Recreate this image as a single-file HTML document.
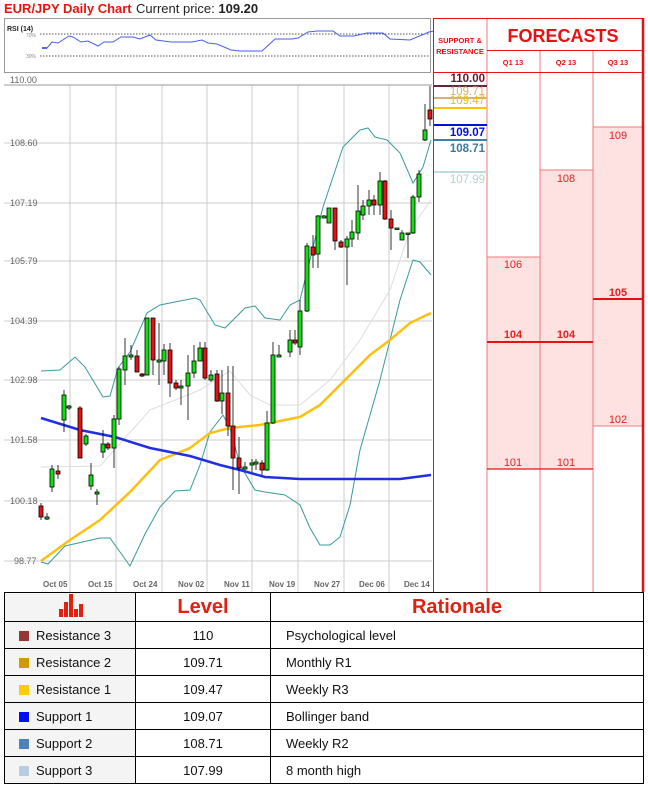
<!DOCTYPE html>
<html><head><meta charset="utf-8"><style>
html,body{margin:0;padding:0;background:#fff;width:648px;height:792px;overflow:hidden;font-family:"Liberation Sans",sans-serif}
svg{position:absolute;left:0;top:0}
table{position:absolute;left:4px;top:592px;width:640px;border-collapse:collapse;table-layout:fixed;font-size:13px;color:#111}
td{border:1.5px solid #000;height:26px;padding:0;white-space:nowrap;overflow:hidden}
tr.h td{height:28px}
.c1{background:#f4f4f4;padding-left:14px}
.c2{text-align:center}
.c3{padding-left:15px}
.sq{display:inline-block;width:10px;height:10px;margin-right:7px;vertical-align:-1px}
.hd{color:#e02010;font-weight:bold;font-size:20px;text-align:center}
</style></head><body>
<svg width="648" height="592" xmlns="http://www.w3.org/2000/svg" font-family="Liberation Sans, sans-serif">
<text x="4" y="13" fill="#e8140c" font-size="13" font-weight="bold">EUR/JPY Daily Chart</text>
<text x="136" y="13" fill="#222" font-size="13">Current price: <tspan font-weight="bold">109.20</tspan></text>
<rect x="4.5" y="18.5" width="426" height="54" fill="#fff" stroke="#999"/>
<text x="7" y="31" font-size="7" font-weight="bold" fill="#222">RSI (14)</text>
<text x="26" y="37" font-size="5" fill="#888">70%</text>
<text x="26" y="58" font-size="5" fill="#888">30%</text>
<line x1="40" y1="34" x2="430" y2="34" stroke="#555" stroke-dasharray="1.5,1.5"/>
<line x1="40" y1="56" x2="430" y2="56" stroke="#555" stroke-dasharray="1.5,1.5"/>
<polyline fill="none" stroke="#4a5cf0" stroke-width="1" points="42,48 47,48 52,42 58,43 69,36 73,37 81,42 88,41 98,46 104,42 113,42 121,37 133,37 140,39 150,35 156,40 171,42 192,42 202,40 208,43 217,44 231,50 240,51 262,51 275,39 292,39 298,38 308,32 317,31 333,31 340,36 354,36 367,33 383,33 390,39 410,40 429,32 434,31"/>
<polyline fill="none" stroke="#2233dd" stroke-width="1.5" points="42,48 47,48"/>
<g stroke="#ccc" stroke-width="1">
<line x1="4" y1="143" x2="432" y2="143"/><line x1="4" y1="203" x2="432" y2="203"/>
<line x1="4" y1="261" x2="432" y2="261"/><line x1="4" y1="321" x2="432" y2="321"/>
<line x1="4" y1="380" x2="432" y2="380"/><line x1="4" y1="440" x2="432" y2="440"/>
<line x1="4" y1="501" x2="432" y2="501"/><line x1="4" y1="561" x2="432" y2="561"/>
<line x1="70" y1="85" x2="70" y2="592"/><line x1="116" y1="85" x2="116" y2="592"/>
<line x1="162" y1="85" x2="162" y2="592"/><line x1="207" y1="85" x2="207" y2="592"/>
<line x1="252" y1="85" x2="252" y2="592"/><line x1="298" y1="85" x2="298" y2="592"/>
<line x1="344" y1="85" x2="344" y2="592"/><line x1="389" y1="85" x2="389" y2="592"/>
</g>
<line x1="4" y1="85" x2="432" y2="85" stroke="#999"/>
<g font-size="9" fill="#666">
<text x="10" y="83">110.00</text><text x="10" y="146">108.60</text><text x="10" y="206">107.19</text>
<text x="10" y="264">105.79</text><text x="10" y="324">104.39</text><text x="10" y="383">102.98</text>
<text x="10" y="443">101.58</text><text x="10" y="504">100.18</text><text x="14" y="564">98.77</text>
</g>
<g font-size="8" fill="#666" font-weight="bold">
<text x="43" y="587">Oct 05</text><text x="88" y="587">Oct 15</text><text x="133" y="587">Oct 24</text>
<text x="178" y="587">Nov 02</text><text x="224" y="587">Nov 11</text><text x="269" y="587">Nov 19</text>
<text x="314" y="587">Nov 27</text><text x="359" y="587">Dec 06</text><text x="404" y="587">Dec 14</text>
</g>
<polyline fill="none" stroke="#ddd" stroke-width="1" points="41,467 100,466 150,410 200,390 230,371 250,395 270,405 300,405 330,380 360,340 390,290 410,230 431,200"/>
<polyline fill="none" stroke="#3a9a9a" stroke-width="1" points="41,371 60,370 75,357 85,367 103,397 110,396 118,368 130,352 147,313 160,305 195,298 200,300 215,325 225,328 245,308 255,306 265,318 280,320 290,305 300,300 323,207 343,147 360,130 368,128 375,137 387,140 400,153 413,183 423,167 431,140"/>
<polyline fill="none" stroke="#3a9a9a" stroke-width="1" points="41,562 48,564 65,546 100,538 110,538 130,566 145,534 160,507 175,491 190,490 200,465 210,432 223,415 230,428 240,465 255,490 265,492 285,495 300,505 310,528 320,545 330,545 340,537 350,505 360,450 380,380 400,300 413,260 420,262 431,275"/>
<polyline fill="none" stroke="#fcc010" stroke-width="2.5" points="41,561 70,540 100,520 130,492 160,460 190,448 210,433 230,428 260,425 300,417 320,405 350,375 370,355 390,340 410,323 431,313"/>
<polyline fill="none" stroke="#2030e0" stroke-width="2.5" points="41,418 80,430 115,437 150,448 190,456 220,465 240,470 265,477 300,479 350,479 400,479 431,475"/>
<g id="c" stroke="#000" stroke-width="0.8"></g>
<rect x="487" y="257" width="53" height="212" fill="#fee2e2"/>
<rect x="540" y="170" width="53" height="299" fill="#fee2e2"/>
<rect x="593" y="127" width="50" height="299" fill="#fee2e2"/>
<g stroke="#f07878" stroke-width="1">
<line x1="487" y1="257" x2="540" y2="257"/><line x1="540" y1="170" x2="593" y2="170"/>
<line x1="593" y1="127" x2="643" y2="127"/><line x1="593" y1="426" x2="643" y2="426"/>
<line x1="540" y1="50" x2="540" y2="592"/><line x1="593" y1="50" x2="593" y2="592"/>
<line x1="487" y1="18" x2="487" y2="592"/>
</g>
<g stroke="#e81010">
<line x1="487" y1="469" x2="593" y2="469" stroke-width="1.2"/>
<line x1="487" y1="342" x2="593" y2="342" stroke-width="2"/>
<line x1="593" y1="299" x2="643" y2="299" stroke-width="2"/>
<line x1="433.5" y1="18" x2="433.5" y2="592" stroke-width="1"/>
<line x1="433" y1="18.5" x2="644" y2="18.5" stroke-width="1"/>
<line x1="487" y1="50.5" x2="644" y2="50.5" stroke-width="1"/>
<line x1="433" y1="72.5" x2="644" y2="72.5" stroke-width="1"/>
<line x1="643" y1="18" x2="643" y2="592" stroke-width="2.5"/>
</g>
<text x="460" y="43" font-size="7.5" font-weight="bold" fill="#e81010" text-anchor="middle">SUPPORT &amp;</text>
<text x="460" y="54" font-size="7.5" font-weight="bold" fill="#e81010" text-anchor="middle">RESISTANCE</text>
<text x="563" y="42" font-size="18" font-weight="bold" fill="#e81010" text-anchor="middle">FORECASTS</text>
<g font-size="7.5" font-weight="bold" fill="#e81010" text-anchor="middle">
<text x="513" y="65">Q1 13</text><text x="566" y="65">Q2 13</text><text x="618" y="65">Q3 13</text>
</g>
<g font-size="11" fill="#e82020" text-anchor="middle">
<text x="513" y="268">106</text><text x="566" y="182">108</text><text x="618" y="139">109</text>
<text x="618" y="423">102</text><text x="513" y="466">101</text><text x="566" y="466">101</text>
<text x="513" y="338" font-weight="bold">104</text><text x="566" y="338" font-weight="bold">104</text>
<text x="618" y="296" font-weight="bold">105</text>
</g>
<g stroke-width="2">
<line x1="434" y1="86" x2="487" y2="86" stroke="#6b2040"/>
<line x1="434" y1="98" x2="487" y2="98" stroke="#d8b070"/>
<line x1="434" y1="108" x2="487" y2="108" stroke="#ffc000"/>
<line x1="434" y1="125" x2="487" y2="125" stroke="#0010e0"/>
<line x1="434" y1="140" x2="487" y2="140" stroke="#4080a8"/>
<line x1="434" y1="172" x2="487" y2="172" stroke="#c0dcd8"/>
</g>
<g font-size="11.5" font-weight="bold" text-anchor="end">
<text x="485" y="82" fill="#5a1a30">110.00</text>
<text x="485" y="95" fill="#d8b070" font-weight="normal">109.71</text>
<text x="485" y="104" fill="#f0c000" font-weight="normal">109.47</text>
<text x="485" y="136" fill="#0010e0">109.07</text>
<text x="485" y="152" fill="#3878a0">108.71</text>
<text x="485" y="183" fill="#b0d4d0" font-weight="normal">107.99</text>
</g>
</svg>
<table>
<colgroup><col style="width:131px"><col style="width:135px"><col></colgroup>
<tr class="h"><td class="c1" style="position:relative">
<svg width="30" height="26" style="position:absolute;left:53px;top:1px"><g fill="#e02010">
<rect x="1" y="15" width="4" height="8"/><rect x="6" y="8" width="4" height="15"/><rect x="11" y="0" width="4" height="23"/><rect x="16" y="15" width="4" height="8"/><rect x="21" y="10" width="4" height="13"/></g></svg>
</td><td class="c2 hd">Level</td><td class="hd">Rationale</td></tr>
<tr><td class="c1"><span class="sq" style="background:#953735"></span>Resistance 3</td><td class="c2">110</td><td class="c3">Psychological level</td></tr>
<tr><td class="c1"><span class="sq" style="background:#d09a00"></span>Resistance 2</td><td class="c2">109.71</td><td class="c3">Monthly R1</td></tr>
<tr><td class="c1"><span class="sq" style="background:#ffcc00"></span>Resistance 1</td><td class="c2">109.47</td><td class="c3">Weekly R3</td></tr>
<tr><td class="c1"><span class="sq" style="background:#0010f0"></span>Support 1</td><td class="c2">109.07</td><td class="c3">Bollinger band</td></tr>
<tr><td class="c1"><span class="sq" style="background:#4f81bd"></span>Support 2</td><td class="c2">108.71</td><td class="c3">Weekly R2</td></tr>
<tr><td class="c1"><span class="sq" style="background:#b8cce4"></span>Support 3</td><td class="c2">107.99</td><td class="c3">8 month high</td></tr>
</table>
<script>
var d=[[41,506,517,'r',503,520],[47,517,519,'g',513,520],[52,469,487,'g',465,492],[58,471,474,'r',465,479],[64,395,420,'g',390,432],[69,406,408,'g',405,410],[80,408,458,'r',406,458],[86,436,444,'g',434,446],[91,475,486,'g',463,490],[97,492,494,'g',489,505],[103,444,452,'g',430,458],[108,444,448,'r',442,450],[114,419,448,'g',415,468],[119,369,419,'g',367,425],[125,356,370,'g',338,385],[131,355,357,'g',345,360],[137,356,372,'r',350,372],[142,374,376,'r',373,377],[147,318,375,'g',318,375],[153,318,360,'r',318,375],[159,360,362,'g',323,385],[164,350,361,'g',344,375],[170,350,383,'r',343,397],[176,383,388,'r',380,390],[181,386,388,'g',380,405],[188,373,386,'g',355,420],[194,361,373,'g',345,378],[200,348,361,'g',342,361],[205,348,378,'r',342,380],[211,375,380,'g',370,382],[217,374,401,'r',370,402],[222,393,401,'g',370,414],[228,393,426,'r',366,436],[233,426,458,'r',366,490],[239,458,468,'r',437,494],[245,467,469,'g',462,470],[252,463,465,'g',459,472],[256,462,464,'g',459,470],[262,463,470,'r',460,475],[267,423,470,'g',411,471],[273,355,423,'g',342,424],[279,355,357,'g',345,357],[290,340,352,'g',330,357],[295,340,343,'r',330,345],[300,311,347,'g',300,355],[307,246,311,'g',243,312],[313,247,255,'r',235,268],[318,216,254,'g',215,268],[324,216,218,'g',215,218],[329,208,223,'g',208,223],[335,208,241,'r',208,250],[341,242,247,'r',240,248],[347,239,247,'g',236,285],[352,232,239,'g',220,247],[358,211,233,'g',185,240],[363,206,215,'g',200,220],[369,200,206,'g',190,215],[374,200,205,'r',195,215],[380,181,205,'g',172,215],[385,181,219,'r',180,220],[391,219,228,'r',210,250],[397,228,229,'g',228,229],[402,233,240,'g',230,240],[408,233,234,'g',233,258],[413,197,233,'g',195,234],[419,174,197,'g',170,202],[425,130,140,'g',104,141],[430,110,119,'r',86,126]];
var s='';d.forEach(function(c){s+='<line x1="'+c[0]+'" y1="'+c[4]+'" x2="'+c[0]+'" y2="'+c[5]+'"/>';s+='<rect x="'+(c[0]-2)+'" y="'+c[1]+'" width="4" height="'+Math.max(1.5,c[2]-c[1])+'" fill="'+(c[3]=='g'?'#10e010':'#e81010')+'"/>';});
document.getElementById('c').innerHTML=s;
</script>
</body></html>
